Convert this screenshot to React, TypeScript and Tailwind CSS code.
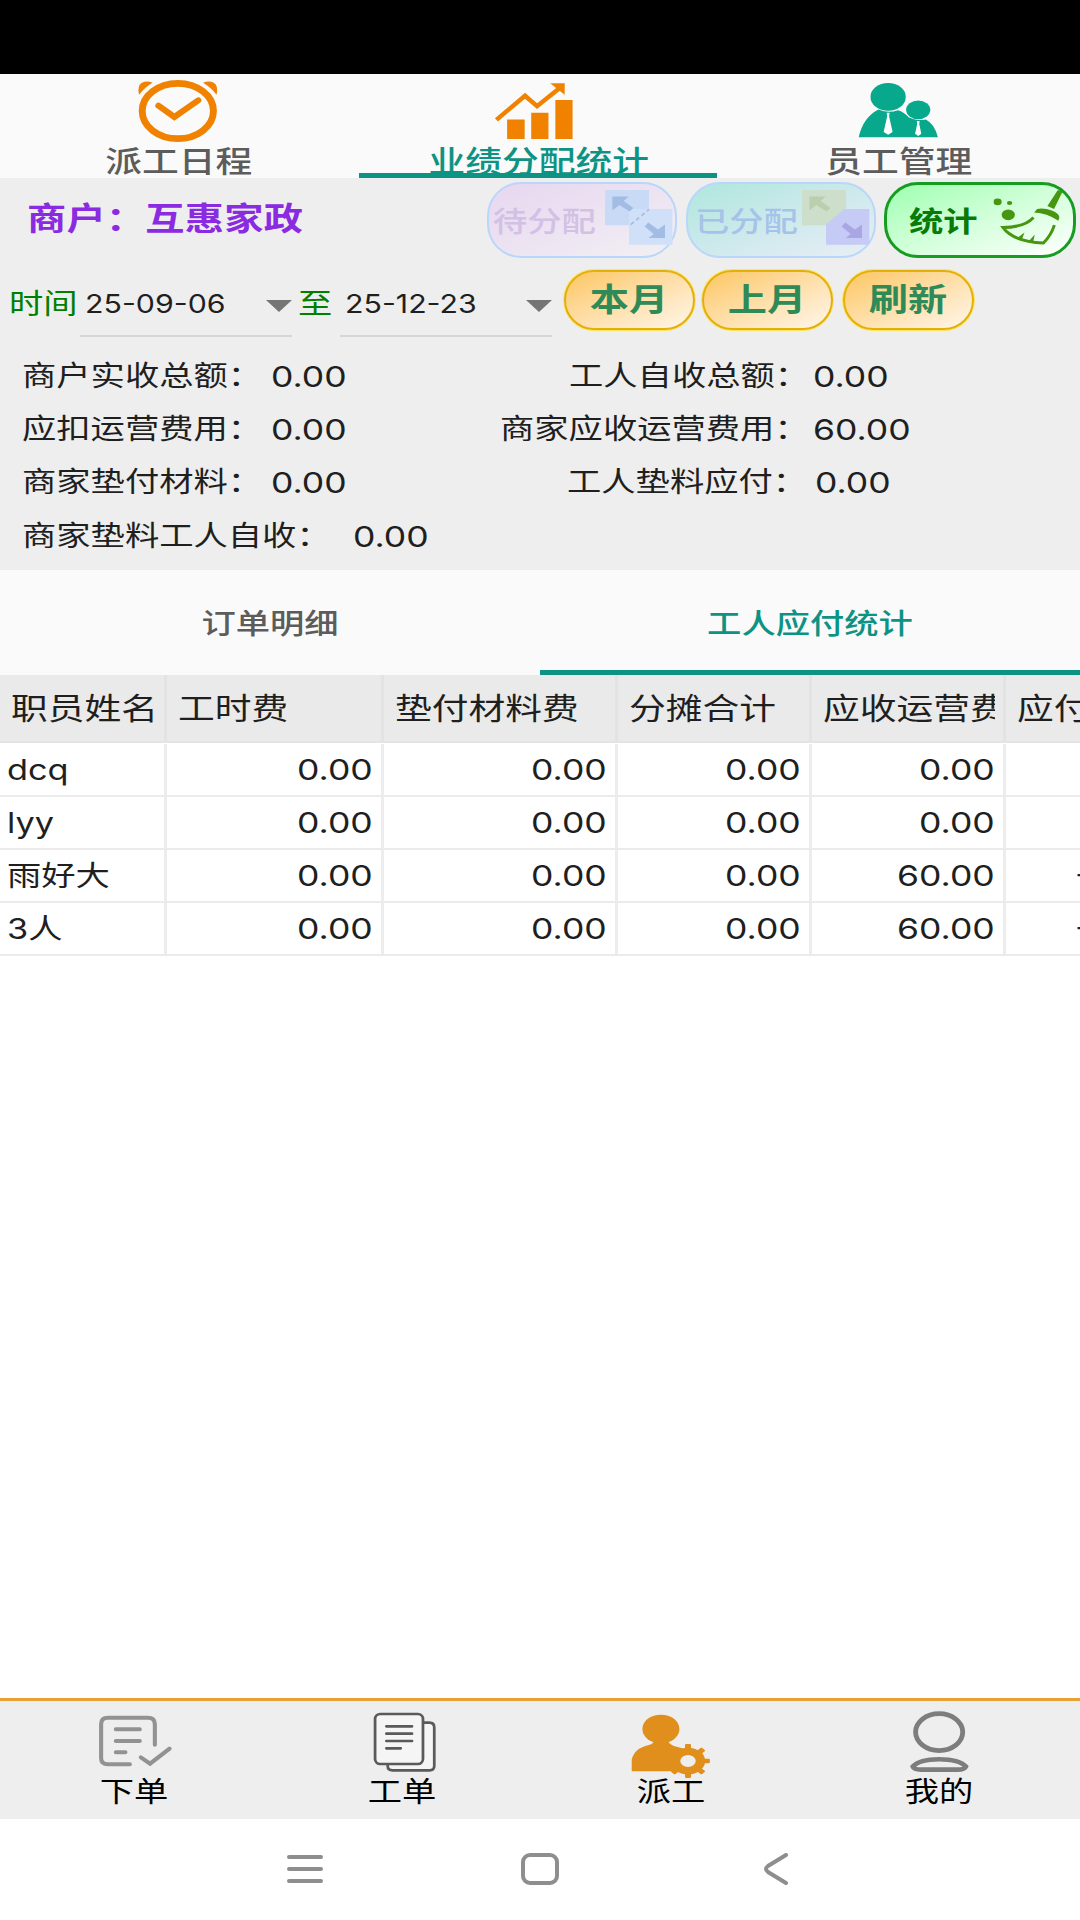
import React from 'react';
import clsx from 'clsx';

interface LabelProps {
  children: React.ReactNode;
  className?: string;
}

// The device renders every label about a quarter wider than tall
const Label: React.FC<LabelProps> = ({ children, className }) => (
  <span className={clsx('block whitespace-pre scale-x-[1.225]', className)}>{children}</span>
);

const ClockIcon = () => (
  <svg width="83" height="65" viewBox="0 0 240 195" preserveAspectRatio="none" fill="#f08200">
    <path d="M6 50Q0 24 13 15Q27 7 45 14Q22 28 6 50ZM230 50Q236 24 223 15Q209 7 191 14Q214 28 230 50Z" />
    <ellipse cx="118" cy="99" rx="103" ry="83" fill="none" stroke="#f08200" strokeWidth="20" />
    <path d="M62 83L108 117L177 67" fill="none" stroke="#f08200" strokeWidth="18" strokeLinecap="round" />
  </svg>
);

const ChartIcon = () => (
  <svg width="81" height="61" viewBox="0 0 235 182" preserveAspectRatio="none" fill="#f08200">
    <path d="M38 118H89V176H38ZM108 98H158V176H108ZM178 60H228V176H178Z" />
    <path d="M7 119L90 47L125 78L188 26" fill="none" stroke="#f08200" strokeWidth="13" />
    <path d="M163 10H205V44Z" />
  </svg>
);

const PeopleIcon = () => (
  <svg width="83" height="58" viewBox="0 0 240 175" preserveAspectRatio="none" fill="#08a88c">
    <ellipse cx="90" cy="48" rx="51" ry="42" />
    <ellipse cx="177" cy="87" rx="35" ry="28" />
    <path d="M5 170Q17 110 62 86Q90 98 119 88Q138 95 150 110Q177 122 199 116Q225 130 234 170Z" />
    <path d="M86 96H94L93 108L103 154L90 162L77 154L87 108ZM173 121H181L180 130L186 159L177 166L168 159L174 130Z" fill="#fff" />
  </svg>
);

interface SwapIconProps {
  back: string;
  front: string;
  arrowA: string;
  arrowB: string;
  cut?: boolean;
}

const SwapIcon: React.FC<SwapIconProps> = ({ back, front, arrowA, arrowB, cut }) => (
  <svg width="70" height="57" viewBox="0 0 210 170" preserveAspectRatio="none">
    <path d="M3 3H135V60L75 108H3Z" fill={back} />
    <path d={cut ? 'M75 105L130 60H205V166H75Z' : 'M75 60H205V166H75Z'} fill={front} />
    <path d="M25 22H74L59 36L88 57L77 67L46 48L25 64Z" fill={arrowA} />
    <path d="M183 146H134L149 134L122 112L133 100L162 121L183 106Z" fill={arrowB} />
    {!cut && <path d="M80 106L135 61" stroke={arrowA} strokeWidth="5" strokeDasharray="12 9" />}
  </svg>
);

const BroomIcon = () => (
  <svg width="73" height="58" viewBox="0 0 220 175" preserveAspectRatio="none" fill="#46960f">
    <ellipse cx="17" cy="39" rx="12" ry="10" />
    <ellipse cx="53" cy="42" rx="8" ry="6" />
    <ellipse cx="49" cy="78" rx="20" ry="16" />
    <path d="M198 4Q208 2 212 9L187 60L167 51Z" />
    <path d="M127 71L136 60Q160 57 180 65Q203 74 203 86L200 96Q165 72 127 71Z" />
    <path d="M125 86Q98 116 33 116Q62 158 155 163Q178 140 188 109" fill="none" stroke="#46960f" strokeWidth="9" />
    <path d="M78 146L98 131L90 152ZM112 156L129 137L124 160Z" />
  </svg>
);

const OrderIcon = () => (
  <svg width="76" height="54" viewBox="0 0 222 162" preserveAspectRatio="none" fill="none" stroke="#929292" strokeWidth="12" strokeLinecap="round">
    <path d="M96 151H32Q12 151 12 132V30Q12 11 32 11H148Q169 11 169 30V92M55 46H125M55 81H125M55 115H83M128 130L155 149L212 104" />
  </svg>
);

const SheetsIcon = () => (
  <svg width="65" height="62" viewBox="0 0 190 186" preserveAspectRatio="none" fill="#f5f5f5" stroke="#5a5a5a" strokeWidth="8" strokeLinecap="round">
    <path d="M150 35H168Q182 35 182 50V165Q182 178 168 178H60Q46 178 46 166V155Z" />
    <rect x="9" y="9" width="140" height="150" rx="15" />
    <path d="M42 46H117M42 68H117M42 90H117M42 112H84" />
  </svg>
);

const TEETH = [0, 45, 90, 135, 180, 225, 270, 315];

const DispatchIcon = () => (
  <svg width="81" height="66" viewBox="0 0 236 198" preserveAspectRatio="none" fill="#e08f1c">
    <ellipse cx="90" cy="48" rx="54" ry="43" />
    <path d="M5 175V140Q12 106 55 96Q70 92 70 82H111Q112 93 128 99L160 108V175Z" />
    <g transform="translate(169 144) scale(1.25 1)">
      <circle r="40" />
      {TEETH.map((deg) => (
        <rect key={deg} x="-7" y="-51" width="14" height="16" rx="3" transform={`rotate(${deg})`} />
      ))}
      <circle r="18" fill="#eee" />
    </g>
  </svg>
);

const ProfileIcon = () => (
  <svg width="61" height="63" viewBox="0 0 176 188" preserveAspectRatio="none" fill="none" stroke="#7d7d7d" strokeWidth="14">
    <ellipse cx="87" cy="66" rx="68" ry="55" />
    <path d="M11 169Q30 147 87 147Q145 147 164 169Q160 178 140 178H35Q14 178 11 169Z" />
  </svg>
);

const topTabs = [
  { label: '派工日程', icon: <ClockIcon />, pad: 'pt-[4px] pr-[3px]', color: 'text-[#5c5c5c]' },
  { label: '业绩分配统计', icon: <ChartIcon />, pad: 'pt-[6px] pr-[11px]', color: 'text-[#0d9384]' },
  { label: '员工管理', icon: <PeopleIcon />, pad: 'pt-[7px] pr-[4px]', color: 'text-[#5c5c5c]' },
];

const columns = [
  { title: '职员姓名', width: 'w-[167px]', pad: 'pl-[11px]' },
  { title: '工时费', width: 'w-[217px]', pad: 'pl-[11px]' },
  { title: '垫付材料费', width: 'w-[234px]', pad: 'pl-[11px]' },
  { title: '分摊合计', width: 'w-[194px]', pad: 'pl-[11px]' },
  { title: '应收运营费', width: 'w-[194px]', pad: 'pl-[11px]' },
  { title: '应付合计', width: 'w-[194px]', pad: 'pl-[11px]' },
];

const rows = [
  ['dcq', '0.00', '0.00', '0.00', '0.00', '0.00'],
  ['lyy', '0.00', '0.00', '0.00', '0.00', '0.00'],
  ['雨好大', '0.00', '0.00', '0.00', '60.00', '-60.00'],
  ['3人', '0.00', '0.00', '0.00', '60.00', '-60.00'],
];

const navItems = [
  { label: '下单', icon: <OrderIcon />, pad: 'pb-[12px] pl-[2px]' },
  { label: '工单', icon: <SheetsIcon />, pad: 'pb-[7px] pl-[4px]' },
  { label: '派工', icon: <DispatchIcon />, pad: 'pb-[1px]' },
  { label: '我的', icon: <ProfileIcon />, pad: 'pb-[7px] pl-[2px]' },
];

const DatePicker: React.FC<{ value: string }> = ({ value }) => (
  <div className="flex h-[66px] w-[212px] items-center justify-between border-b-2 border-[#d6d6d6] pl-[5px]">
    <span className="block origin-left scale-x-[1.165] pt-[2px] text-[26px] whitespace-nowrap">{value}</span>
    <svg className="mt-[5px]" width="26" height="12" viewBox="0 0 26 12" fill="#757575">
      <path d="M0 0H26L13 12Z" />
    </svg>
  </div>
);

const PillButton: React.FC<LabelProps> = ({ children, className }) => (
  <button
    className={clsx(
      'flex h-[60px] w-[131px] items-center justify-center rounded-full border-2 border-[#e3b008] bg-linear-to-br from-[#fcc65e] to-[#fff6ea] text-[32px] font-bold text-[#2e8b57] ring-1 ring-[#ffe45e]',
      className,
    )}
  >
    <Label>{children}</Label>
  </button>
);

interface StatProps {
  label: string;
  value: string;
  labelWidth: string;
  className?: string;
}

const Stat: React.FC<StatProps> = ({ label, value, labelWidth, className }) => (
  <div className={clsx('flex items-center', className)}>
    <div className={clsx('shrink-0', labelWidth)}>
      <Label className="origin-left pb-px text-[28px]">{label}</Label>
    </div>
    <Label className="origin-left text-[29px]">{value}</Label>
  </div>
);

export default function App() {
  return (
    <div className="flex h-[1920px] w-[1080px] flex-col overflow-hidden bg-white font-['Inter','Noto_Sans_CJK_SC',sans-serif] leading-none text-[#1f1f1f]">
      <div className="h-[74px] shrink-0 bg-black" />

      <div className="relative grid h-[104px] shrink-0 grid-cols-3 bg-[#fafafa]">
        {topTabs.map((tab) => (
          <div key={tab.label} className="flex flex-col items-center justify-between">
            <div className={clsx('h-[70px]', tab.pad)}>{tab.icon}</div>
            <Label className={clsx('h-[32px] pr-[2px] text-[30px] font-medium', tab.color)}>{tab.label}</Label>
          </div>
        ))}
        <div className="absolute bottom-0 left-[359px] h-[5px] w-[358px] bg-[#0d9384]" />
      </div>

      <div className="h-[392px] shrink-0 bg-[#eee]">
        <div className="flex h-[84px] items-start pt-[4px]">
          <div className="w-[487px] pt-[21px] pl-[27px]">
            <Label className="origin-left text-[32px] font-bold tracking-[0.2px] text-[#8a2be2]">商户：互惠家政</Label>
          </div>
          <button className="flex h-[76px] w-[190px] items-center justify-between rounded-[34px] border-2 border-[#b9d6fb] bg-linear-to-br from-[#e7d6f0] to-[#f2f0f3] pl-[4px]">
            <Label className="origin-left pt-[4px] text-[28px] font-medium text-[#d2c0e5]">待分配</Label>
            <div className="h-[62px] pr-px">
              <SwapIcon back="#c8daf5" front="#cfe0f8" arrowA="#a3bce3" arrowB="#a3bce3" />
            </div>
          </button>
          <button className="ml-[9px] flex h-[76px] w-[190px] items-center justify-between rounded-[34px] border-2 border-[#b9d6fb] bg-linear-to-br from-[#aee7dd] via-[#cde9ec] to-[#e9eef6] pl-[7px]">
            <Label className="origin-left pt-[4px] text-[28px] font-medium text-[#a5c3e8]">已分配</Label>
            <div className="h-[62px] pr-[3px]">
              <SwapIcon back="#cddfcb" front="#c5cbf5" arrowA="#b9cfae" arrowB="#aaa5e3" cut />
            </div>
          </button>
          <button className="ml-[8px] flex h-[76px] w-[192px] items-center justify-between rounded-[34px] border-[3px] border-[#179c22] bg-linear-to-br from-[#9dffb0] via-[#d2ffda] to-white pr-[8px] pl-[22px]">
            <Label className="origin-left pt-[3px] text-[28px] font-bold text-[#087a08]">统计</Label>
            <div className="h-[63px]">
              <BroomIcon />
            </div>
          </button>
        </div>

        <div className="flex h-[80px] items-start pt-[6px]">
          <div className="flex h-[68px] w-[80px] items-center pt-[3px] pl-[9px] text-[28px] text-[#008000]">
            <Label className="origin-left">时间</Label>
          </div>
          <div className="pt-[3px]"><DatePicker value="25-09-06" /></div>
          <div className="flex h-[68px] w-[48px] items-center pt-[3px] pl-[6px] text-[28px] text-[#008000]">
            <Label className="origin-left">至</Label>
          </div>
          <div className="pt-[3px]"><DatePicker value="25-12-23" /></div>
          <PillButton className="mt-[2px] ml-[12px]">本月</PillButton>
          <PillButton className="mt-[2px] ml-[7px]">上月</PillButton>
          <PillButton className="mt-[2px] ml-[10px]">刷新</PillButton>
        </div>

        <div className="flex h-[53px] pt-[15px]">
          <Stat className="w-[569px] pl-[22px]" labelWidth="w-[249px]" label="商户实收总额：" value="0.00" />
          <Stat labelWidth="w-[244px]" label="工人自收总额：" value="0.00" />
        </div>
        <div className="flex h-[53px] pt-[15px]">
          <Stat className="w-[500px] pl-[22px]" labelWidth="w-[249px]" label="应扣运营费用：" value="0.00" />
          <Stat labelWidth="w-[313px]" label="商家应收运营费用：" value="60.00" />
        </div>
        <div className="flex h-[53px] pt-[15px]">
          <Stat className="w-[567px] pl-[22px]" labelWidth="w-[249px]" label="商家垫付材料：" value="0.00" />
          <Stat labelWidth="w-[248px]" label="工人垫料应付：" value="0.00" />
        </div>
        <div className="flex h-[55px] pt-[16px]">
          <Stat className="pl-[22px]" labelWidth="w-[331px]" label="商家垫料工人自收：" value="0.00" />
        </div>
      </div>

      <div className="grid h-[105px] shrink-0 grid-cols-2 bg-[#fafafa] text-[28px] font-medium">
        <div className="flex items-center justify-center pt-[2px] text-[#5c5c5c]">
          <Label>订单明细</Label>
        </div>
        <div className="flex items-center justify-center border-b-[5px] border-[#0d9384] pt-[7px] text-[#0d9384]">
          <Label>工人应付统计</Label>
        </div>
      </div>

      <div className="w-[1200px]">
        <div className="flex h-[68px] border-b-2 border-[#e4e4e4] bg-[#eaeaea] text-[30px]">
          {columns.map((col) => (
            <div key={col.title} className={clsx('flex shrink-0 items-center border-r-[3px] border-[#e3e3e3] pr-[8px]', col.width, col.pad)}>
              <div className="w-full overflow-hidden py-1">
                <Label className="origin-left">{col.title}</Label>
              </div>
            </div>
          ))}
        </div>
        {rows.map((row, r) => (
          <div key={row[0]} className={clsx('flex border-b-2 border-[#ebebeb]', r === 0 ? 'h-[54px] pt-px' : 'h-[53px]')}>
            {row.map((cell, i) => (
              <div
                key={i}
                className={clsx(
                  'flex shrink-0 items-center border-r-[3px] border-[#ededed]',
                  columns[i].width,
                  i === 0 ? 'pl-[7px] text-[28px]' : 'justify-end pr-[8px] text-[29px]',
                )}
              >
                <Label className={i === 0 ? 'origin-left' : 'origin-right'}>{cell}</Label>
              </div>
            ))}
          </div>
        ))}
      </div>

      <div className="mt-auto h-[121px] shrink-0 border-t-[3px] border-[#e9a136] bg-[#eee]">
        <div className="grid w-[1073px] grid-cols-4">
          {navItems.map((item) => (
            <div key={item.label} className="flex flex-col items-center">
              <div className={clsx('flex h-[79px] items-end', item.pad)}>{item.icon}</div>
              <Label className="-mt-[2px] text-[28px] text-black">{item.label}</Label>
            </div>
          ))}
        </div>
      </div>

      <div className="flex h-[101px] shrink-0 items-center bg-white pb-[2px] pl-[285px]">
        <svg width="40" height="32" viewBox="0 0 40 32" stroke="#8e8e8e" strokeWidth="4" strokeLinecap="round">
          <path d="M4 4H36M4 16H36M4 28H36" />
        </svg>
        <svg className="ml-[195px]" width="40" height="32" viewBox="0 0 40 32" fill="none" stroke="#8e8e8e" strokeWidth="4">
          <rect x="3" y="2" width="34" height="28" rx="7" />
        </svg>
        <svg className="ml-[203px]" width="26" height="32" viewBox="0 0 26 32" fill="none" stroke="#8e8e8e" strokeWidth="4" strokeLinecap="round">
          <path d="M23 2L5 13Q1 16 5 19L23 30" />
        </svg>
      </div>
    </div>
  );
}
